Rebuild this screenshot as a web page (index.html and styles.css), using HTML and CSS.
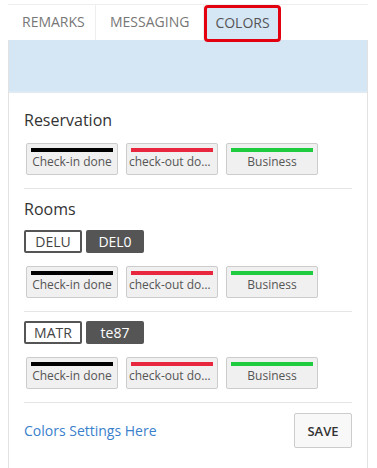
FILE: index.html
```html
<!DOCTYPE html>
<html lang="en">
<head>
    <meta charset="UTF-8">
    <meta name="viewport" content="width=device-width, initial-scale=1.0">
    <title>Colors</title>
    <link rel="stylesheet" href="styles.css">
</head>
<body>

<div class="tabs">
    <div class="tab">REMARKS</div>
    <div class="tab">MESSAGING</div>
    <div class="tab active">COLORS</div>
</div>

<div class="panel">
    <div class="band"></div>
    <div class="content">
        <h3 class="first">Reservation</h3>
        <div class="swatches">
            <div class="swatch"><span class="bar black"></span><span class="label">Check-in done</span></div>
            <div class="swatch"><span class="bar red"></span><span class="label">check-out done</span></div>
            <div class="swatch"><span class="bar green"></span><span class="label">Business</span></div>
        </div>
        <hr>

        <h3>Rooms</h3>
        <div class="tags">
            <span class="tag">DELU</span>
            <span class="tag dark">DEL0</span>
        </div>
        <div class="swatches">
            <div class="swatch"><span class="bar black"></span><span class="label">Check-in done</span></div>
            <div class="swatch"><span class="bar red"></span><span class="label">check-out done</span></div>
            <div class="swatch"><span class="bar green"></span><span class="label">Business</span></div>
        </div>
        <hr>

        <div class="tags">
            <span class="tag">MATR</span>
            <span class="tag dark">te87</span>
        </div>
        <div class="swatches">
            <div class="swatch"><span class="bar black"></span><span class="label">Check-in done</span></div>
            <div class="swatch"><span class="bar red"></span><span class="label">check-out done</span></div>
            <div class="swatch"><span class="bar green"></span><span class="label">Business</span></div>
        </div>
        <hr>

        <div class="footer">
            <a href="#" class="link">Colors Settings Here</a>
            <button type="button">SAVE</button>
        </div>
    </div>
</div>

</body>
</html>
```

FILE: styles.css
```css
* {
    font-family: "Open Sans", sans-serif;
    box-sizing: border-box;
}

body {
    margin: 4px 9px 0 8px;
    background-color: #fff;
    color: #333;
}

.tabs {
    display: flex;
    border-top: 1px solid #eee;
    height: 36px;
}

.tab {
    padding: 0 14px;
    font-size: 14px;
    line-height: 34px;
    color: #777;
    border-right: 1px solid #eee;
}

.tab:first-child {
    width: 88px;
}

.tab.active {
    margin-left: 0;
    border: 3px solid #e3000f;
    border-radius: 4px;
    background-color: #d5e6f5;
    color: #555;
    padding: 0 8px;
    line-height: 30px;
    height: 37px;
}

.panel {
    border: 1px solid #e2e2e2;
    border-top: none;
}

.band {
    height: 53px;
    background-color: #d5e6f5;
    border-bottom: 2px solid #deebf5;
}

.content {
    padding: 16px 15px 20px 15px;
}

h3 {
    font-size: 16px;
    font-weight: 400;
    line-height: 22px;
    margin: 1px 0 10px 0;
    color: #333;
}

h3.first {
    margin: 0 0 12px 0;
}

.swatches {
    display: flex;
    gap: 8px;
    padding-left: 2px;
}

.swatch {
    width: 92px;
    height: 32px;
    background-color: #f0f0f0;
    border: 1px solid #ccc;
    border-radius: 2px;
    padding: 4px 4px 0 4px;
    display: flex;
    flex-direction: column;
    align-items: center;
}

.bar {
    display: block;
    width: 82px;
    height: 4px;
}

.black { background-color: #000; }
.red { background-color: #e8263e; }
.green { background-color: #1fcc3f; }

.label {
    font-size: 12px;
    line-height: 20px;
    color: #555;
    white-space: nowrap;
    overflow: hidden;
    text-overflow: ellipsis;
    max-width: 86px;
}

hr {
    border: none;
    border-top: 1px solid #e5e5e5;
    margin: 13px 0 9px 0;
}

.tags {
    display: flex;
    gap: 4px;
    margin-bottom: 13px;
}

.tag {
    width: 58px;
    height: 23px;
    font-size: 14px;
    line-height: 19px;
    text-align: center;
    border: 2px solid #555;
    border-radius: 2px;
    color: #444;
}

.tag.dark {
    background-color: #555;
    color: #fff;
}

.footer {
    display: flex;
    justify-content: space-between;
    align-items: center;
    padding-top: 1px;
}

.link {
    color: #3a7fcc;
    text-decoration: none;
    font-size: 14px;
}

button {
    width: 58px;
    height: 35px;
    background-color: #f8f8f8;
    border: 1px solid #ccc;
    border-radius: 2px;
    font-size: 13px;
    font-weight: 600;
    color: #333;
}
```
